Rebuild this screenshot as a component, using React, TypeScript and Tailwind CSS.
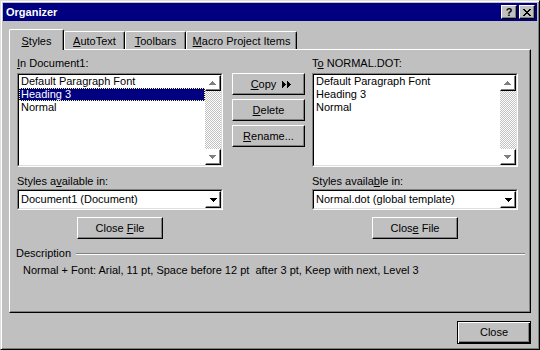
import React from "react";

const raised =
  "border border-t-white border-l-white border-r-black border-b-black shadow-[inset_-1px_-1px_0_#808080]";

function Sunken({ className, children }: { className: string; children: React.ReactNode }) {
  return (
    <div className={`border border-t-[#808080] border-l-[#808080] border-r-white border-b-white ${className}`}>
      <div className="h-full border border-t-black border-l-black border-r-[#dfdfdf] border-b-[#dfdfdf] bg-white flex">
        {children}
      </div>
    </div>
  );
}

function UpArrow() {
  return (
    <svg width="14" height="14" viewBox="0 0 14 14" shapeRendering="crispEdges">
      <g fill="#ffffff">
        <rect x="7" y="6" width="1" height="1" />
        <rect x="6" y="7" width="3" height="1" />
        <rect x="5" y="8" width="5" height="1" />
        <rect x="4" y="9" width="7" height="1" />
      </g>
      <g fill="#808080">
        <rect x="6" y="5" width="1" height="1" />
        <rect x="5" y="6" width="3" height="1" />
        <rect x="4" y="7" width="5" height="1" />
        <rect x="3" y="8" width="7" height="1" />
      </g>
    </svg>
  );
}

function DownArrowGrey() {
  return (
    <svg width="14" height="14" viewBox="0 0 14 14" shapeRendering="crispEdges">
      <g fill="#ffffff">
        <rect x="4" y="6" width="7" height="1" />
        <rect x="5" y="7" width="5" height="1" />
        <rect x="6" y="8" width="3" height="1" />
        <rect x="7" y="9" width="1" height="1" />
      </g>
      <g fill="#808080">
        <rect x="3" y="5" width="7" height="1" />
        <rect x="4" y="6" width="5" height="1" />
        <rect x="5" y="7" width="3" height="1" />
        <rect x="6" y="8" width="1" height="1" />
      </g>
    </svg>
  );
}

function DownArrowBlack() {
  return (
    <svg width="7" height="4" viewBox="0 0 7 4" shapeRendering="crispEdges" fill="#000">
      <rect x="0" y="0" width="7" height="1" />
      <rect x="1" y="1" width="5" height="1" />
      <rect x="2" y="2" width="3" height="1" />
      <rect x="3" y="3" width="1" height="1" />
    </svg>
  );
}

function CopyArrows() {
  return (
    <svg width="10" height="7" viewBox="0 0 10 7" shapeRendering="crispEdges" fill="#000">
      <rect x="0" y="0" width="1" height="7" />
      <rect x="1" y="1" width="1" height="5" />
      <rect x="2" y="2" width="1" height="3" />
      <rect x="3" y="3" width="1" height="1" />
      <rect x="5" y="0" width="1" height="7" />
      <rect x="6" y="1" width="1" height="5" />
      <rect x="7" y="2" width="1" height="3" />
      <rect x="8" y="3" width="1" height="1" />
    </svg>
  );
}

function CloseGlyph() {
  return (
    <svg width="8" height="7" viewBox="0 0 8 7" shapeRendering="crispEdges" fill="#000">
      <rect x="0" y="0" width="2" height="1" />
      <rect x="6" y="0" width="2" height="1" />
      <rect x="1" y="1" width="2" height="1" />
      <rect x="5" y="1" width="2" height="1" />
      <rect x="2" y="2" width="4" height="1" />
      <rect x="3" y="3" width="2" height="1" />
      <rect x="2" y="4" width="4" height="1" />
      <rect x="1" y="5" width="2" height="1" />
      <rect x="5" y="5" width="2" height="1" />
      <rect x="0" y="6" width="2" height="1" />
      <rect x="6" y="6" width="2" height="1" />
    </svg>
  );
}

function ListBox({ items, selected }: { items: string[]; selected: number }) {
  return (
    <Sunken className="h-[94px]">
      <div className="flex-1">
        {items.map((it, i) => (
          <div
            key={it}
            className={
              i === selected
                ? "h-[13px] leading-[13px] pl-[2px] bg-[#000080] text-white outline-1 outline-dotted outline-[#ffff80] -outline-offset-1"
                : "h-[13px] leading-[13px] pl-[2px]"
            }
          >
            {it}
          </div>
        ))}
      </div>
      <div className="w-[16px] flex flex-col">
        <div className={`h-[16px] ${raised} flex items-center justify-center`}>
          <UpArrow />
        </div>
        <div className="flex-1 bg-[image:repeating-conic-gradient(#ffffff_0_25%,#c0c0c0_0_50%)] bg-[length:2px_2px]" />
        <div className={`h-[16px] ${raised} flex items-center justify-center`}>
          <DownArrowGrey />
        </div>
      </div>
    </Sunken>
  );
}

function Combo({ text }: { text: string }) {
  return (
    <Sunken className="h-[21px]">
      <div className="flex-1 pl-[2px] leading-[17px] whitespace-nowrap">{text}</div>
      <div className={`w-[16px] h-[17px] ${raised} flex items-center justify-center`}>
        <DownArrowBlack />
      </div>
    </Sunken>
  );
}

function Btn({ children, className }: { children: React.ReactNode; className: string }) {
  return <div className={`h-[22px] ${raised} flex items-center justify-center ${className}`}>{children}</div>;
}

export default function App() {
  return (
    <div className="w-[540px] h-[350px] bg-[#c0c0c0] border border-t-[#dfdfdf] border-l-[#dfdfdf] border-r-black border-b-black shadow-[inset_1px_1px_0_#fff,inset_-1px_-1px_0_#808080] p-[2px] font-['Liberation_Sans',Arial,sans-serif] text-[11px] leading-[13px] text-black select-none">
      {/* Title bar */}
      <div className="h-[18px] bg-[#000080] flex items-center pl-[3px] pr-[2px]">
        <div className="flex-1 text-white font-bold text-[11px] leading-[13px]">Organizer</div>
        <div className={`w-[16px] h-[14px] bg-[#c0c0c0] ${raised} flex items-center justify-center font-bold text-[11px] leading-[12px]`}>
          ?
        </div>
        <div className={`ml-[2px] w-[16px] h-[14px] bg-[#c0c0c0] ${raised} flex items-center justify-center`}>
          <CloseGlyph />
        </div>
      </div>

      {/* Tabs */}
      <div className="ml-[6px] mt-[8px] flex items-end h-[20px]">
        <div className="relative z-10 -mb-px h-[21px] w-[55px] bg-[#c0c0c0] border-t border-l border-r border-t-white border-l-white border-r-black shadow-[inset_-1px_0_0_#808080] rounded-t-[2px] flex justify-center pt-[5px]">
          <span>
            <u>S</u>tyles
          </span>
        </div>
        <div className="h-[18px] w-[61px] border-t border-l border-r border-t-white border-l-white border-r-black shadow-[inset_-1px_0_0_#808080] rounded-t-[2px] flex justify-center pt-[3px]">
          <span>
            <u>A</u>utoText
          </span>
        </div>
        <div className="h-[18px] w-[61px] border-t border-l border-r border-t-white border-l-white border-r-black shadow-[inset_-1px_0_0_#808080] rounded-t-[2px] flex justify-center pt-[3px]">
          <span>
            <u>T</u>oolbars
          </span>
        </div>
        <div className="h-[18px] w-[111px] border-t border-l border-r border-t-white border-l-white border-r-black shadow-[inset_-1px_0_0_#808080] rounded-t-[2px] flex justify-center pt-[3px]">
          <span>
            <u>M</u>acro Project Items
          </span>
        </div>
      </div>

      {/* Panel */}
      <div className="ml-[6px] w-[522px] h-[264px] border border-t-white border-l-white border-r-black border-b-black shadow-[inset_-1px_-1px_0_#808080] pt-[7px]">
        <div className="flex pl-[7px]">
          {/* Left column */}
          <div className="w-[206px] flex flex-col">
            <div>
              <u>I</u>n Document1:
            </div>
            <div className="mt-[3px]">
              <ListBox items={["Default Paragraph Font", "Heading 3", "Normal"]} selected={1} />
            </div>
            <div className="mt-[8px]">
              Styles a<u>v</u>ailable in:
            </div>
            <div className="mt-[1px]">
              <Combo text="Document1 (Document)" />
            </div>
            <div className="mt-[7px] flex justify-center">
              <Btn className="w-[86px]">
                <span>
                  Close <u>F</u>ile
                </span>
              </Btn>
            </div>
          </div>

          {/* Middle buttons */}
          <div className="ml-[9px] w-[73px] mt-[16px] flex flex-col gap-[4px]">
            <Btn className="w-[73px]">
              <span className="flex items-center gap-[6px] pl-[6px]">
                <span>
                  <u>C</u>opy
                </span>
                <CopyArrows />
              </span>
            </Btn>
            <Btn className="w-[73px]">
              <span>
                <u>D</u>elete
              </span>
            </Btn>
            <Btn className="w-[73px]">
              <span>
                <u>R</u>ename...
              </span>
            </Btn>
          </div>

          {/* Right column */}
          <div className="ml-[7px] w-[206px] flex flex-col">
            <div>
              T<u>o</u> NORMAL.DOT:
            </div>
            <div className="mt-[3px]">
              <ListBox items={["Default Paragraph Font", "Heading 3", "Normal"]} selected={-1} />
            </div>
            <div className="mt-[8px]">
              Styles availa<u>b</u>le in:
            </div>
            <div className="mt-[1px]">
              <Combo text="Normal.dot (global template)" />
            </div>
            <div className="mt-[7px] flex justify-center">
              <Btn className="w-[86px]">
                <span>
                  Clos<u>e</u> File
                </span>
              </Btn>
            </div>
          </div>
        </div>

        {/* Description */}
        <div className="mt-[8px] flex items-center pl-[6px] pr-[5px]">
          <span>Description</span>
          <div className="ml-[5px] flex-1 h-[2px] border-t border-t-[#808080] border-b border-b-white" />
        </div>
        <div className="mt-[4px] pl-[13px] whitespace-pre">
          {"Normal + Font: Arial, 11 pt, Space before 12 pt  after 3 pt, Keep with next, Level 3"}
        </div>
      </div>

      {/* Bottom buttons */}
      <div className="mt-[8px] flex justify-end pr-[6px]">
        <div className="w-[74px] h-[23px] border border-black shadow-[inset_1px_1px_0_#fff,inset_-1px_-1px_0_#000,inset_-2px_-2px_0_#808080] flex items-center justify-center">
          Close
        </div>
      </div>
    </div>
  );
}
